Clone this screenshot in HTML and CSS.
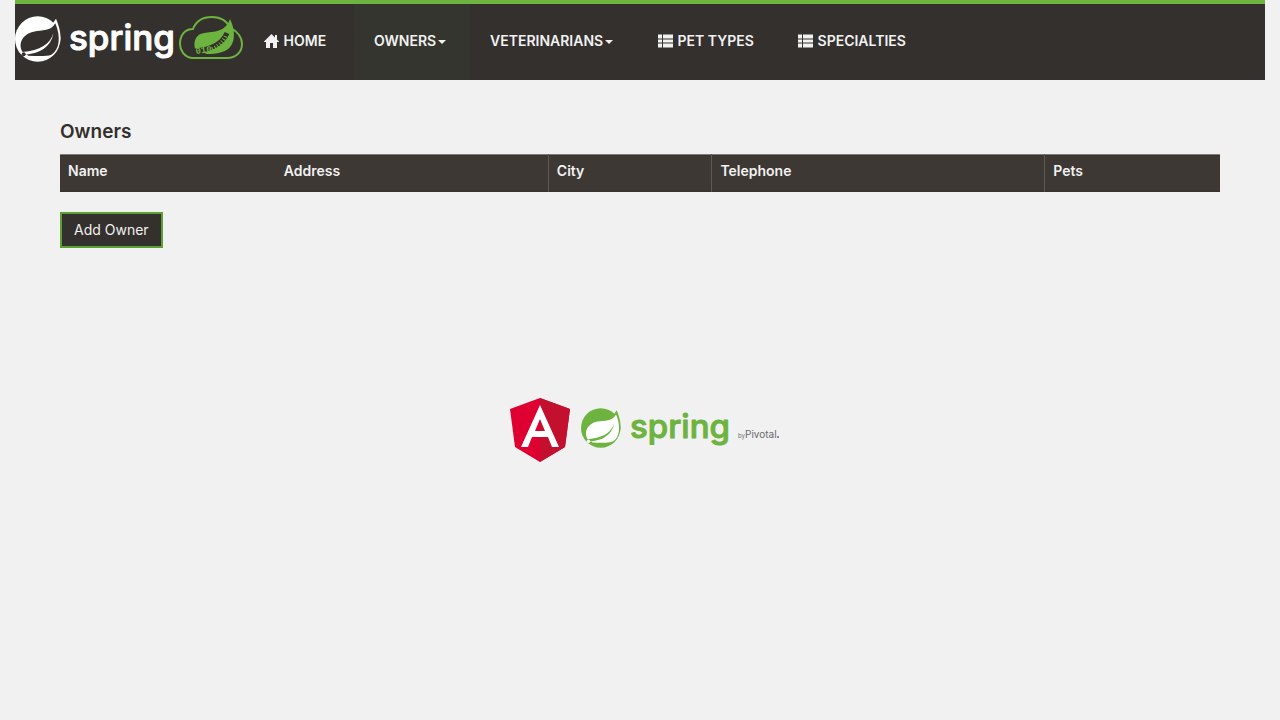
FILE: index.html
```html
<!DOCTYPE html>
<html lang="en">
<head>
<meta charset="utf-8">
<title>Owners</title>
<link rel="stylesheet" href="styles.css">
</head>
<body>
<svg class="symbols" aria-hidden="true">
  <symbol id="spring-mark" viewBox="0 0 138 138">
    <circle cx="68" cy="69" r="68" fill="currentColor"/>
    <path fill="currentColor" d="M123 8C132 30 140 54 135 80L112 90L108 30Z"/>
    <path class="leaf" d="M121 22C108 46 82 42 56 47C22 54 8 84 23 108L40 119C72 121 96 121 109 116C134 102 138 62 121 22Z"/>
    <path fill="currentColor" d="M115 52C106 84 76 104 22 108L28 116C72 114 108 94 115 52Z"/>
    <circle class="leaf" cx="26" cy="115" r="6"/>
  </symbol>
  <symbol id="list" viewBox="0 0 15 13">
    <path fill="currentColor" d="M0 0h4v4H0zM5 0h10v4H5zM0 5h4v3H0zM5 5h10v3H5zM0 9h4v4H0zM5 9h10v4H5z"/>
  </symbol>
</svg>
<div class="shell">
  <header class="navbar">
    <a class="brand" href="#" aria-label="Spring">
      <svg class="brand-art" viewBox="0 0 229 48">
        <use href="#spring-mark" x="0" y="1" width="46" height="46"/>
        <text class="wordmark" x="54" y="35" font-size="35">spring</text>
        <path fill="none" stroke="#6db33f" stroke-width="2" d="M177 43C169 42 165 35 165 29C165 20 170 14 178 14C181 6 188 2 197 2C206 2 212 6 215 13C222 16 227 22 227 29C227 37 221 43 212 43Z"/>
        <path fill="#6db33f" d="M215 4C222 18 220 34 207 37C201 39 196 39 192 39L180 34C178 26 181 19 189 18C199 16 210 18 215 4Z"/>
        <path fill="none" stroke="#34302d" stroke-width="5" d="M180 36C193 35 207 30 212 18"/>
        <path fill="none" stroke="#6db33f" stroke-width="4" stroke-dasharray="1 2" d="M197 34C204 31 209 26 211 20"/>
        <text class="binary" x="181" y="39" transform="rotate(-8 181 39)">010</text>
      </svg>
    </a>
    <nav>
      <ul class="menu">
        <li class="w-home"><a href="#"><svg class="icon" viewBox="0 0 15 14"><path fill="currentColor" d="M7.500 0L0 7.500V8h2v6h4v-5h3v5h4V8h2v-.5L13 5.500V1h-2v2.500z"/></svg> HOME</a></li>
        <li class="w-owners active"><a href="#">OWNERS<span class="caret"></span></a></li>
        <li class="w-vets"><a href="#">VETERINARIANS<span class="caret"></span></a></li>
        <li class="w-types"><a href="#"><svg class="icon"><use href="#list"/></svg> PET TYPES</a></li>
        <li><a href="#"><svg class="icon"><use href="#list"/></svg> SPECIALTIES</a></li>
      </ul>
    </nav>
  </header>
  <main class="content">
    <h2>Owners</h2>
    <table>
      <colgroup><col class="c-name"><col class="c-address"><col class="c-city"><col class="c-phone"><col class="c-pets"></colgroup>
      <thead><tr><th scope="col">Name</th><th scope="col">Address</th><th scope="col">City</th><th scope="col">Telephone</th><th scope="col">Pets</th></tr></thead>
    </table>
    <button class="add" type="button">Add Owner</button>
  </main>
  <footer class="footer">
    <svg class="angular" viewBox="0 0 62 66" role="img" aria-label="Angular">
      <path fill="#dd0031" d="M31 1L1 12L6 50L31 65L56 50L61 12Z"/>
      <path fill="#c3102f" d="M31 1V65L56 50L61 12Z"/>
      <path fill="#fff" fill-rule="evenodd" d="M31 8L12 50H19L23 40H39L43 50H50ZM31 22L36 34H26Z"/>
    </svg>
    <svg class="pivotal" viewBox="0 -4 200 54" role="img" aria-label="Spring by Pivotal">
      <use href="#spring-mark" x="0" y="1" width="40" height="40"/>
      <text class="wordmark" x="49" y="31" font-size="33">spring</text>
      <text class="by" x="157" y="31" font-size="6">by</text>
      <text class="by" x="164" y="31" font-size="10">Pivotal</text>
      <circle cx="197" cy="30" r="1" fill="#6b6b70"/>
    </svg>
  </footer>
</div>
</body>
</html>
```
FILE: styles.css
```css
* { box-sizing: border-box; }
body { margin: 0; background: #f1f1f1; color: #34302d; font: 14px/20px Inter, "Open Sans", sans-serif; }
.symbols { display: block; width: 0; height: 0; }
.leaf { fill: var(--leaf); }
.shell { padding: 0 15px; }
.navbar { display: flex; background: #34302d; border-top: 4px solid #6db33f; }
.brand { --leaf: #34302d; color: #fff; padding-top: 11px; }
.brand-art { display: block; width: 229px; height: 48px; }
.wordmark { font-family: Inter, sans-serif; font-weight: 500; fill: currentColor; stroke: currentColor; stroke-width: 1; stroke-linejoin: round; }
.binary { font: bold 9px "Liberation Mono", monospace; fill: #6db33f; }
.menu { display: flex; margin: 0; padding: 0; list-style: none; }
.menu a { display: block; padding: 27px 20px 29px; color: #f1f1f1; font-weight: 600; text-decoration: none; white-space: nowrap; }
.active { background: #35352f; }
.w-home { min-width: 110px; }
.w-owners { min-width: 116px; }
.w-vets { min-width: 168px; }
.w-types { min-width: 140px; }
.icon { width: 15px; height: 14px; margin-right: 1px; vertical-align: -2px; }
.caret { display: inline-block; margin-left: 2px; vertical-align: middle; border: 4px solid transparent; border-top-color: currentColor; border-bottom: 0; }
.content { padding: 40px 45px 0; }
h2 { margin: 0 0 10px; font-size: 19px; line-height: 24px; font-weight: 600; }
table { width: 100%; table-layout: fixed; border-collapse: collapse; margin-bottom: 20px; }
.c-name { width: 18.6%; }
.c-address { width: 23.5%; }
.c-city { width: 14.1%; }
.c-phone { width: 28.7%; }
.c-pets { width: 15.1%; }
thead { background: linear-gradient(#3d3833 90%, #34302d); border-top: 1px solid #817e77; }
th { padding: 6px 8px 11px; color: #f1f1f1; text-align: left; font-weight: 600; }
th:nth-child(n+3) { border-left: 1px solid #5c5852; }
.add { padding: 6px 12px; border: 2px solid #5aa033; background: #34302d; color: #f1f1f1; font: inherit; }
.footer { display: flex; justify-content: center; align-items: center; gap: 10px; padding: 149px 0 0 10px; }
.angular { width: 62px; height: 66px; }
.pivotal { --leaf: #fff; width: 200px; height: 54px; color: #6db33f; }
.by { font-family: Inter, sans-serif; fill: #6b6b70; }
```
